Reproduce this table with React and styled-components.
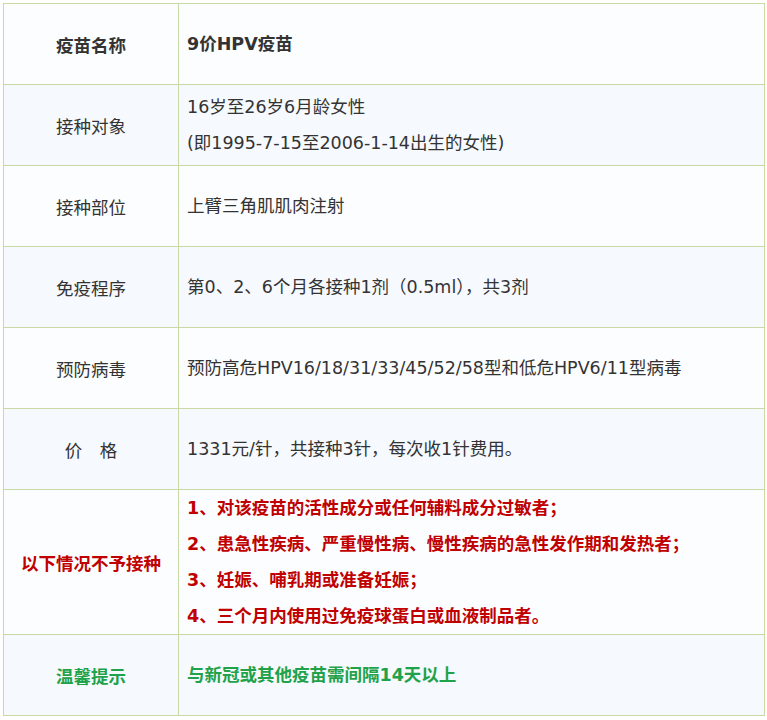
import styled, { createGlobalStyle } from 'styled-components'

const GlobalStyle = createGlobalStyle`
  body {
    margin: 0;
    background: #fff;
    font-family: "DejaVu Sans", "Noto Sans CJK SC", sans-serif;
  }
`

const Page = styled.div`
  padding: 3px;
`

const Table = styled.div`
  width: 760px;
  border: 1px solid #c9d9a6;
  border-bottom: none;
  color: #333;
  font-size: 17.5px;
`

const Row = styled.div`
  display: grid;
  grid-template-columns: 175px 1fr;
  min-height: 80px;
  border-bottom: 1px solid #c9d9a6;
  background: ${(p) => (p.$tint ? '#f6f9fd' : '#fcfdfe')};
`

const Label = styled.div`
  display: flex;
  align-items: center;
  justify-content: center;
  border-right: 1px solid #c9d9a6;
  font-weight: ${(p) => (p.$bold ? 700 : 400)};
  color: ${(p) => p.$color || '#333'};
`

const Value = styled.div`
  display: flex;
  flex-direction: column;
  justify-content: center;
  padding: 0 8px;
  font-weight: ${(p) => (p.$bold ? 700 : 400)};
  color: ${(p) => p.$color || '#333'};
`

const Line = styled.div`
  line-height: 36px;
  white-space: nowrap;
`

const RED = '#c00000'
const GREEN = '#1fa249'

const rows = [
  { label: '疫苗名称', lines: ['9价HPV疫苗'], bold: true },
  { label: '接种对象', lines: ['16岁至26岁6月龄女性', '(即1995-7-15至2006-1-14出生的女性)'] },
  { label: '接种部位', lines: ['上臂三角肌肌肉注射'] },
  { label: '免疫程序', lines: ['第0、2、6个月各接种1剂（0.5ml），共3剂'] },
  { label: '预防病毒', lines: ['预防高危HPV16/18/31/33/45/52/58型和低危HPV6/11型病毒'] },
  { label: '价\u3000格', lines: ['1331元/针，共接种3针，每次收1针费用。'] },
  {
    label: '以下情况不予接种',
    lines: [
      '1、对该疫苗的活性成分或任何辅料成分过敏者；',
      '2、患急性疾病、严重慢性病、慢性疾病的急性发作期和发热者；',
      '3、妊娠、哺乳期或准备妊娠；',
      '4、三个月内使用过免疫球蛋白或血液制品者。',
    ],
    bold: true,
    color: RED,
  },
  { label: '温馨提示', lines: ['与新冠或其他疫苗需间隔14天以上'], bold: true, color: GREEN },
]

const App = () => (
  <Page>
    <GlobalStyle />
    <Table>
      {rows.map((r, i) => (
        <Row key={r.label} $tint={i % 2 === 1}>
          <Label $bold={r.bold} $color={r.color}>{r.label}</Label>
          <Value $bold={r.bold} $color={r.color}>
            {r.lines.map((l) => (
              <Line key={l}>{l}</Line>
            ))}
          </Value>
        </Row>
      ))}
    </Table>
  </Page>
)

export default App
